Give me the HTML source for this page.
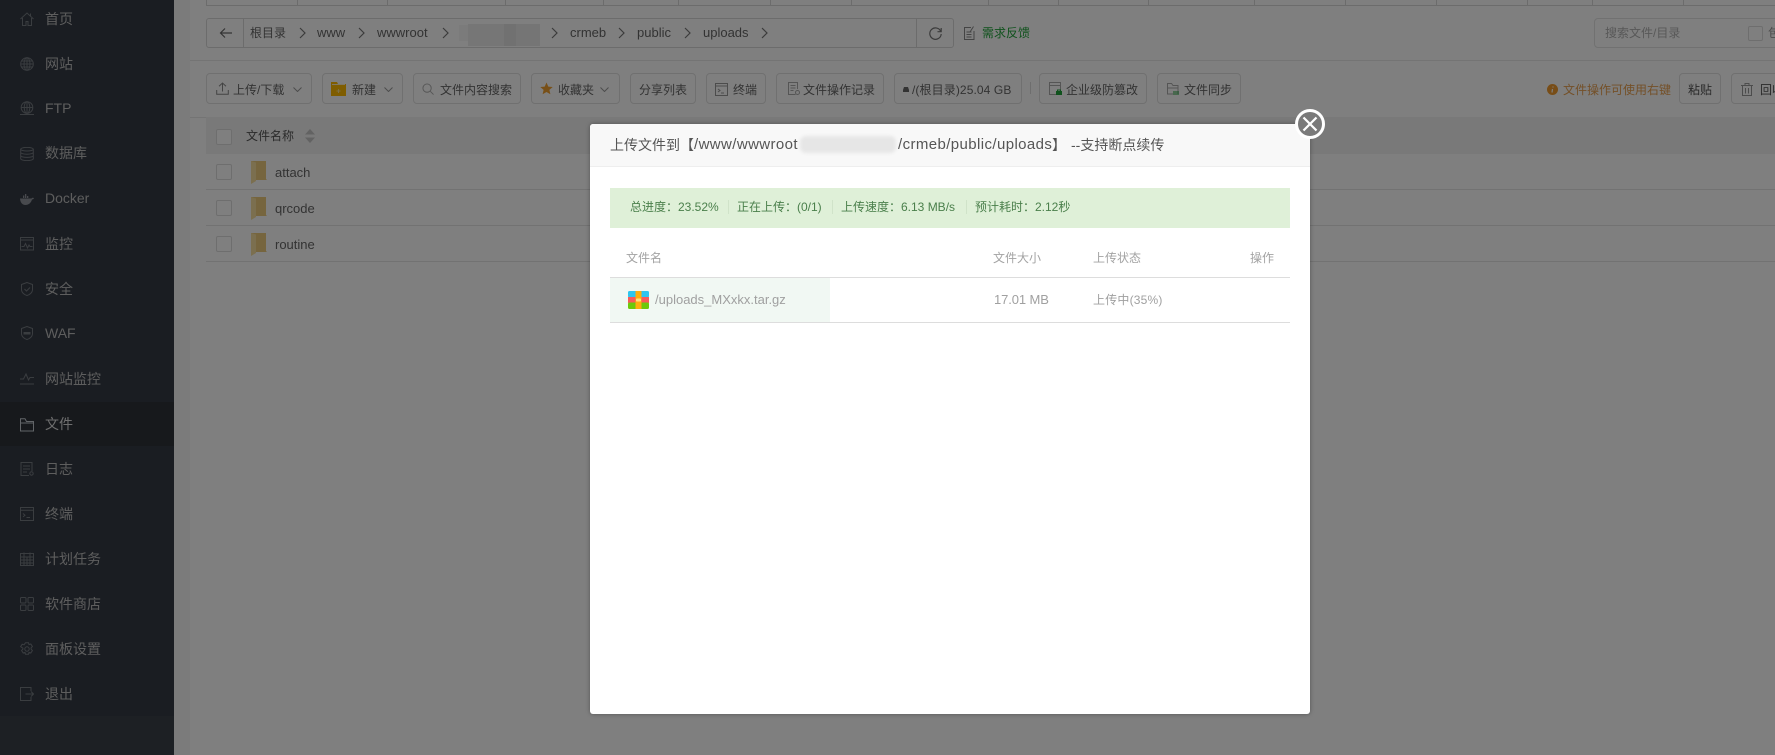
<!DOCTYPE html>
<html lang="zh">
<head>
<meta charset="utf-8">
<title>文件管理</title>
<style>
html,body{margin:0;padding:0;width:1775px;height:755px;overflow:hidden;background:#fff}
body{position:relative;font-family:"Liberation Sans","Noto Sans CJK SC",sans-serif;font-size:12px;color:#666}
div,svg{position:absolute;box-sizing:border-box}
.t{white-space:nowrap;line-height:20px;height:20px}
.lat{font-size:13px}
#side{left:0;top:0;width:174px;height:755px;background:#3a4049}
#menu{left:0;top:0;width:174px;height:716px;background:#343a44}
#act{left:0;top:402px;width:174px;height:44px;background:#2e3239}
.m{left:45px;font-size:14px;color:#bcbcbc;line-height:20px;height:20px;white-space:nowrap}
.i{left:20px;width:14px;height:14px;fill:none;stroke:#757a81;stroke-width:1}
#gut{left:174px;top:0;width:16px;height:755px;background:#f6f6f6}
.v{top:0;width:1px;height:5px;background:#d8d8d8}
.b{top:73px;height:31px;border:1px solid #e0e0e0;border-radius:4px;background:#fff}
.b2{top:80px;font-size:12px;color:#666}
.h{height:1px;background:#e8e8e8}
.cb{left:216px;width:16px;height:16px;border:1px solid #ddd;border-radius:2px;background:#fff}
.row{left:206px;width:1569px;height:1px;background:#e4e4e4}
.ch{width:7px;height:12px;top:27px;fill:none;stroke:#777;stroke-width:1.200}
#ov{left:0;top:0;width:1775px;height:755px;background:rgba(0,0,0,.5)}
#modal{left:590px;top:124px;width:720px;height:590px;background:#fff;border-radius:3px;box-shadow:0 0 4px rgba(0,0,0,.35)}
#mh{left:0;top:0;width:720px;height:43px;background:#f8f8f8;border-bottom:1px solid #eee;border-radius:3px 3px 0 0}
.g{top:197px;color:#4a7f4b;font-size:12px}
.gs{top:200px;width:1px;height:14px;background:#d0e3c9}
.th{top:248px;color:#a3a3a3;font-size:12px}
.ti{top:135px;font-size:14px;color:#555}
.tl{top:135px;font-size:15px;color:#555;letter-spacing:.4px}
</style>
</head>
<body>
<div id="side"></div><div id="menu"></div><div id="act"></div>

<svg class="i" style="top:12px" viewBox="0 0 14 14"><path d="M.5 7 7 1l6.500 6M2.500 6v7.500h3.500V9.500h2v4h3.500V6M10.500 1.500V4"/></svg>
<div class="m" style="top:9px">首页</div>
<svg class="i" style="top:57px" viewBox="0 0 14 14"><circle cx="7" cy="7" r="6.300"/><ellipse cx="7" cy="7" rx="3" ry="6.300"/><path d="M7 .7v12.600M.7 7h12.600M1.500 4h11M1.500 10h11"/></svg>
<div class="m" style="top:54px">网站</div>
<svg class="i" style="top:101px" viewBox="0 0 14 14"><circle cx="7" cy="6.500" r="5.800"/><ellipse cx="7" cy="6.500" rx="2.800" ry="5.800"/><path d="M7 .7v11.600M1.200 6.500h11.600M0 13.500h14"/></svg>
<div class="m" style="top:98px">FTP</div>
<svg class="i" style="top:147px" viewBox="0 0 14 14"><ellipse cx="7" cy="2.200" rx="6.300" ry="1.800"/><path d="M.7 2.200v9.600c0 1 2.800 1.800 6.300 1.800s6.300-.8 6.300-1.800V2.200M.7 5.400c0 1 2.800 1.800 6.300 1.800s6.300-.8 6.300-1.800M.7 8.600c0 1 2.800 1.800 6.300 1.800s6.300-.8 6.300-1.800"/></svg>
<div class="m" style="top:143px">数据库</div>
<svg class="i" style="top:192px;stroke:none;fill:#90959c" viewBox="0 0 14 14"><path d="M0 6.500h11.500c.5-.8 1.500-1 2.500-.5-.3 1-1 1.500-2 1.500C11 11 8.500 13 5.500 13 2 13 .2 10 0 6.500zM5 2h1.300v4H5zM3 3.500h1.300V6H3zM7 4h1.300v2H7z"/></svg>
<div class="m" style="top:188px">Docker</div>
<svg class="i" style="top:237px" viewBox="0 0 14 14"><rect x=".5" y=".5" width="13" height="12.500"/><path d="M.5 3h13M1.500 9.500h2.500l1.500-3 2 4.500 1.500-3 1 1.500h2.500"/></svg>
<div class="m" style="top:234px">监控</div>
<svg class="i" style="top:282px" viewBox="0 0 14 14"><path d="M7 .5 1.500 2.500v5C1.500 11 5 13 7 13.500c2-.5 5.500-2.500 5.500-6v-5zM4.500 7l2 2 3.500-3.500"/></svg>
<div class="m" style="top:279px">安全</div>
<svg class="i" style="top:326px" viewBox="0 0 14 14"><path d="M7 .5 1.500 2.500v5C1.500 11 5 13 7 13.500c2-.5 5.500-2.500 5.500-6v-5z"/><path d="M3.500 6h7v2.500h-7z" fill="#757a81" stroke="none"/></svg>
<div class="m" style="top:323px">WAF</div>
<svg class="i" style="top:371px" viewBox="0 0 14 14"><path d="M0 8h3.500L6 3l2.500 6 1.500-2.500h4M0 13h14"/></svg>
<div class="m" style="top:369px">网站监控</div>
<svg class="i" style="top:418px;stroke:#c4cad1" viewBox="0 0 14 14"><path d="M.5 13V.8h4.500L6.500 3.500h7V13zM.5 5h13"/></svg>
<div class="m" style="top:414px;color:#dedede">文件</div>
<svg class="i" style="top:462px" viewBox="0 0 14 14"><path d="M12 9V.5H1v13h8M3 4h7M3 7h7M3 10h4"/><circle cx="11.500" cy="11.500" r="1.700"/></svg>
<div class="m" style="top:459px">日志</div>
<svg class="i" style="top:507px" viewBox="0 0 14 14"><rect x=".5" y=".5" width="13" height="13"/><path d="M.5 3.200h13M3 6.500l2 1.700-2 1.700M6.500 10.500h3.500"/></svg>
<div class="m" style="top:504px">终端</div>
<svg class="i" style="top:552px" viewBox="0 0 14 14"><rect x=".5" y="1.500" width="13" height="12"/><path d="M.5 5h13M.5 8h13M.5 11h13M4 .5V13M10 .5V13M7 5v8"/></svg>
<div class="m" style="top:549px">计划任务</div>
<svg class="i" style="top:597px" viewBox="0 0 14 14"><rect x=".5" y=".5" width="5.500" height="5.500" rx="1"/><rect x="8" y=".5" width="5.500" height="5.500" rx="1"/><rect x=".5" y="8" width="5.500" height="5.500" rx="1"/><rect x="8" y="8" width="5.500" height="5.500" rx="1"/></svg>
<div class="m" style="top:594px">软件商店</div>
<svg class="i" style="top:642px" viewBox="0 0 14 14"><circle cx="7" cy="7" r="2.200"/><path d="M5.500.8h3l.5 1.800 1.800-.6 1.600 2.500-1.300 1.400v1.200l1.300 1.400-1.600 2.500-1.800-.6-.5 1.800h-3l-.5-1.800-1.800.6-1.600-2.500 1.300-1.400V6.100L.6 4.700l1.600-2.500 1.800.6z"/></svg>
<div class="m" style="top:639px">面板设置</div>
<svg class="i" style="top:687px" viewBox="0 0 14 14"><path d="M11 4V.5H.5v13H11V10M5.500 7h8M11 4.500 13.500 7 11 9.500"/></svg>
<div class="m" style="top:684px">退出</div>

<div id="gut"></div>

<!-- top strip -->
<div class="h" style="left:206px;top:5px;width:1569px;background:#d8d8d8"></div>
<div class="v" style="left:206px"></div><div class="v" style="left:297px"></div><div class="v" style="left:387px"></div><div class="v" style="left:505px"></div><div class="v" style="left:603px"></div><div class="v" style="left:678px"></div><div class="v" style="left:770px"></div><div class="v" style="left:851px"></div><div class="v" style="left:988px"></div><div class="v" style="left:1058px"></div><div class="v" style="left:1148px"></div><div class="v" style="left:1254px"></div><div class="v" style="left:1345px"></div><div class="v" style="left:1436px"></div><div class="v" style="left:1527px"></div><div class="v" style="left:1592px"></div><div class="v" style="left:1683px"></div>

<!-- breadcrumb -->
<div style="left:206px;top:18px;width:748px;height:30px;border:1px solid #d8d8d8;border-radius:3px;background:#fff"></div>
<div style="left:243px;top:18px;width:1px;height:30px;background:#d8d8d8"></div>
<div style="left:916px;top:18px;width:1px;height:30px;background:#d8d8d8"></div>
<svg style="left:219px;top:27px;width:13px;height:12px;fill:none;stroke:#666;stroke-width:1.200" viewBox="0 0 13 12"><path d="M13 6H1.500M6 1.500 1.500 6 6 10.500"/></svg>
<div class="t" style="left:250px;top:23px">根目录</div>
<svg class="ch" style="left:299px" viewBox="0 0 7 12"><path d="M1 1l5 5-5 5"/></svg>
<div class="t lat" style="left:317px;top:23px">www</div>
<svg class="ch" style="left:358px" viewBox="0 0 7 12"><path d="M1 1l5 5-5 5"/></svg>
<div class="t lat" style="left:377px;top:23px">wwwroot</div>
<svg class="ch" style="left:442px" viewBox="0 0 7 12"><path d="M1 1l5 5-5 5"/></svg>
<div style="left:459px;top:25px;width:18px;height:16px;background:#f6f6f6"></div>
<div style="left:468px;top:24px;width:36px;height:22px;background:#ececec"></div>
<div style="left:504px;top:24px;width:12px;height:22px;background:#e2e2e2"></div>
<div style="left:516px;top:24px;width:24px;height:22px;background:#eaeaea"></div>
<svg class="ch" style="left:551px" viewBox="0 0 7 12"><path d="M1 1l5 5-5 5"/></svg>
<div class="t lat" style="left:570px;top:23px">crmeb</div>
<svg class="ch" style="left:618px" viewBox="0 0 7 12"><path d="M1 1l5 5-5 5"/></svg>
<div class="t lat" style="left:637px;top:23px">public</div>
<svg class="ch" style="left:684px" viewBox="0 0 7 12"><path d="M1 1l5 5-5 5"/></svg>
<div class="t lat" style="left:703px;top:23px">uploads</div>
<svg class="ch" style="left:761px" viewBox="0 0 7 12"><path d="M1 1l5 5-5 5"/></svg>
<svg style="left:929px;top:27px;width:13px;height:13px;fill:none;stroke:#777;stroke-width:1.200" viewBox="0 0 13 13"><path d="M11.800 4.500A5.700 5.700 0 1 0 12.200 7M12.200 1v3.700H8.500"/></svg>
<svg style="left:964px;top:26px;width:11px;height:14px;fill:none;stroke:#888;stroke-width:1" viewBox="0 0 11 14"><path d="M7 1.500H.5v12h9.500V5M2.500 6h5M2.500 8.500h5M2.500 11h5M6 6 9.500.5"/></svg>
<div class="t" style="left:982px;top:23px;color:#20a53a">需求反馈</div>

<!-- search -->
<div style="left:1594px;top:18px;width:190px;height:30px;border:1px solid #e2e2e2;border-radius:4px;background:#fff"></div>
<div class="t" style="left:1605px;top:23px;color:#b0b0b0">搜索文件/目录</div>
<div style="left:1748px;top:26px;width:15px;height:15px;border:1px solid #ddd;border-radius:2px"></div>
<div class="t" style="left:1768px;top:23px;color:#999">包</div>

<div class="h" style="left:190px;top:60px;width:1585px"></div>

<!-- toolbar -->
<div class="b" style="left:206px;width:106px"></div>
<svg style="left:216px;top:82px;width:13px;height:13px;fill:none;stroke:#888" viewBox="0 0 13 13"><path d="M6.500 9.500V1M3 4.200 6.500 1 10 4.200M.7 8v4.300h11.600V8"/></svg>
<div class="t b2" style="left:233px">上传/下载</div>
<svg style="left:293px;top:87px;width:9px;height:5px;fill:none;stroke:#999" viewBox="0 0 9 5"><path d="M.5.500 4.500 4.500 8.500.500"/></svg>
<div class="b" style="left:322px;width:81px"></div>
<svg style="left:331px;top:82px;width:15px;height:14px" viewBox="0 0 15 14"><path d="M0 0h6l1 2h8v12H0z" fill="#fb0"/><path d="M1 2.500h13" stroke="#fff" stroke-width=".8"/><path d="M7.500 7v4M5.500 9h4" stroke="#ffe28a" stroke-width="1"/></svg>
<div class="t b2" style="left:352px">新建</div>
<svg style="left:384px;top:87px;width:9px;height:5px;fill:none;stroke:#999" viewBox="0 0 9 5"><path d="M.5.500 4.500 4.500 8.500.500"/></svg>
<div class="b" style="left:413px;width:108px"></div>
<svg style="left:422px;top:83px;width:12px;height:12px;fill:none;stroke:#aaa" viewBox="0 0 13 13"><circle cx="5.500" cy="5.500" r="4.500"/><path d="m9 9 3.500 3.500"/></svg>
<div class="t b2" style="left:440px">文件内容搜索</div>
<div class="b" style="left:531px;width:89px"></div>
<svg style="left:540px;top:82px;width:13px;height:13px" viewBox="0 0 13 13"><path d="M6.500.5 8.300 4.600l4.400.4-3.300 2.900 1 4.400-3.900-2.300-3.900 2.300 1-4.400L.3 5l4.400-.4z" fill="#f0a030"/></svg>
<div class="t b2" style="left:558px">收藏夹</div>
<svg style="left:600px;top:87px;width:9px;height:5px;fill:none;stroke:#999" viewBox="0 0 9 5"><path d="M.5.500 4.500 4.500 8.500.500"/></svg>
<div class="b" style="left:630px;width:66px"></div>
<div class="t b2" style="left:639px">分享列表</div>
<div class="b" style="left:706px;width:60px"></div>
<svg style="left:715px;top:83px;width:13px;height:13px;fill:none;stroke:#999" viewBox="0 0 13 13"><rect x=".5" y=".5" width="12" height="12"/><path d="M.5 3h12M3 6l2 1.500L3 9M6 10h3"/></svg>
<div class="t b2" style="left:733px">终端</div>
<div class="b" style="left:776px;width:108px"></div>
<svg style="left:787px;top:82px;width:13px;height:13px;fill:none;stroke:#aaa" viewBox="0 0 13 13"><path d="M10.500 7V.5h-9v12h7M3.500 3.500h5M3.500 6h5M3.500 8.500h3"/><circle cx="10.500" cy="10.500" r="2"/></svg>
<div class="t b2" style="left:803px">文件操作记录</div>
<div class="b" style="left:894px;width:128px"></div>
<svg style="left:903px;top:87px;width:6px;height:5px" viewBox="0 0 6 5"><path d="M1 0h4l1 3v2H0V3z" fill="#666"/></svg>
<div class="t b2" style="left:912px;letter-spacing:.1px">/(根目录)25.04 GB</div>
<div style="left:1030px;top:82px;width:1px;height:12px;background:#ddd"></div>
<div class="b" style="left:1039px;width:108px"></div>
<svg style="left:1049px;top:82px;width:12px;height:13px;fill:none;stroke:#aaa" viewBox="0 0 12 13"><path d="M7 12.500H.5V.5h11v8M.5 3.500h11"/></svg>
<svg style="left:1056px;top:89px;width:6px;height:6px" viewBox="0 0 6 6"><rect y="2" width="6" height="4" fill="#20a53a"/><path d="M1.500 2.500V1h3v1.500" fill="none" stroke="#20a53a"/></svg>
<div class="t b2" style="left:1066px">企业级防篡改</div>
<div class="b" style="left:1157px;width:84px"></div>
<svg style="left:1167px;top:83px;width:12px;height:12px;fill:none;stroke:#aaa" viewBox="0 0 12 12"><path d="M.5 11V.5h4L6 2.500h5V11zM.5 5h11"/></svg>
<svg style="left:1173px;top:91px;width:6px;height:4px;fill:none;stroke:#20a53a" viewBox="0 0 6 4"><path d="M0 1h6M0 3h6"/></svg>
<div class="t b2" style="left:1184px">文件同步</div>

<svg style="left:1547px;top:84px;width:11px;height:11px" viewBox="0 0 11 11"><circle cx="5.500" cy="5.500" r="5.500" fill="#f09b2e"/><path d="M6 2.500v1M5.500 5 5 8.500" stroke="#fff" stroke-width="1.200"/></svg>
<div class="t b2" style="left:1563px;color:#e8a050">文件操作可使用右键</div>
<div class="b" style="left:1679px;width:42px"></div>
<div class="t b2" style="left:1688px;color:#555">粘贴</div>
<div class="b" style="left:1731px;width:60px"></div>
<svg style="left:1741px;top:83px;width:12px;height:13px;fill:none;stroke:#999" viewBox="0 0 12 13"><path d="M0 2.500h12M4 2.500V.5h4v2M1.500 2.500v10h9v-10M4.500 5v5.500M7.500 5v5.500"/></svg>
<div class="t b2" style="left:1760px;color:#555">回收站</div>

<div class="h" style="left:190px;top:117px;width:1585px"></div>

<!-- table -->
<div style="left:206px;top:117px;width:1569px;height:37px;background:#f2f2f2"></div>
<div class="cb" style="top:129px"></div>
<div class="t" style="left:246px;top:126px;color:#555">文件名称</div>
<svg style="left:305px;top:129px;width:10px;height:14px" viewBox="0 0 10 14"><path d="M5 0l5 5.500H0zM0 8.500h10L5 14z" fill="#c4c4c4"/></svg>

<div class="cb" style="top:164px"></div>
<svg style="left:251px;top:160px;width:16px;height:24px" viewBox="0 0 16 24"><path d="M0 1h15v18l1 1H4v-2H0z" fill="#eccb7c"/><path d="M0 1l5 1.500V21L0 24z" fill="#f6de9e"/></svg>
<div class="t lat" style="left:275px;top:163px">attach</div>
<div class="row" style="top:189px"></div>
<div class="cb" style="top:200px"></div>
<svg style="left:251px;top:196px;width:16px;height:24px" viewBox="0 0 16 24"><path d="M0 1h15v18l1 1H4v-2H0z" fill="#eccb7c"/><path d="M0 1l5 1.500V21L0 24z" fill="#f6de9e"/></svg>
<div class="t lat" style="left:275px;top:199px">qrcode</div>
<div class="row" style="top:225px"></div>
<div class="cb" style="top:236px"></div>
<svg style="left:251px;top:232px;width:16px;height:24px" viewBox="0 0 16 24"><path d="M0 1h15v18l1 1H4v-2H0z" fill="#eccb7c"/><path d="M0 1l5 1.500V21L0 24z" fill="#f6de9e"/></svg>
<div class="t lat" style="left:275px;top:235px">routine</div>
<div class="row" style="top:261px"></div>

<div id="ov"></div>

<!-- modal -->
<div id="modal"><div id="mh"></div></div>
<div class="t ti" style="left:610px">上传文件到【</div>
<div class="t tl" style="left:694px">/www/wwwroot</div>
<div style="left:800px;top:136px;width:96px;height:17px;background:#e6e6e6;filter:blur(1.500px);border-radius:6px"></div>
<div class="t tl" style="left:898px">/crmeb/public/uploads</div>
<div class="t ti" style="left:1052px">】</div>
<div class="t ti" style="left:1071px">--支持断点续传</div>

<div style="left:610px;top:188px;width:680px;height:40px;background:#dff0d8"></div>
<div class="t g" style="left:630px">总进度：23.52%</div>
<div class="gs" style="left:728px"></div>
<div class="t g" style="left:737px">正在上传：(0/1)</div>
<div class="gs" style="left:832px"></div>
<div class="t g" style="left:841px">上传速度：6.13 MB/s</div>
<div class="gs" style="left:966px"></div>
<div class="t g" style="left:975px">预计耗时：2.12秒</div>

<div class="t th" style="left:626px">文件名</div>
<div class="t th" style="left:993px">文件大小</div>
<div class="t th" style="left:1093px">上传状态</div>
<div class="t th" style="left:1250px">操作</div>
<div style="left:610px;top:277px;width:680px;height:1px;background:#ddd"></div>
<div style="left:610px;top:278px;width:220px;height:44px;background:#f1f8f3"></div>
<div style="left:610px;top:322px;width:680px;height:1px;background:#ddd"></div>
<svg style="left:628px;top:291px;width:21px;height:18px" viewBox="0 0 21 18"><rect width="21" height="6.500" rx="1.500" fill="#2ec5ef"/><rect y="6" width="21" height="6" fill="#f95a5a"/><rect y="11.500" width="21" height="6.500" rx="1.500" fill="#6cc90a"/><rect x="7.500" width="6" height="18" fill="#ffae0d"/><rect x="8" y="7.500" width="5" height="3" rx=".8" fill="#ffc" opacity=".6"/></svg>
<div class="t" style="left:655px;top:290px;font-size:13px;color:#a0a0a0">/uploads_MXxkx.tar.gz</div>
<div class="t" style="left:994px;top:290px;font-size:13px;color:#a0a0a0;letter-spacing:-.1px">17.01 MB</div>
<div class="t" style="left:1093px;top:290px;color:#a0a0a0;letter-spacing:.2px">上传中(35%)</div>

<!-- close -->
<svg style="left:1295px;top:109px;width:30px;height:30px" viewBox="0 0 30 30"><circle cx="15" cy="15" r="13.500" fill="#7a7a7a" stroke="#fff" stroke-width="3"/><path d="M8.500 8.500l13 13M21.500 8.500l-13 13" stroke="#fff" stroke-width="2.200" fill="none"/></svg>
</body>
</html>
